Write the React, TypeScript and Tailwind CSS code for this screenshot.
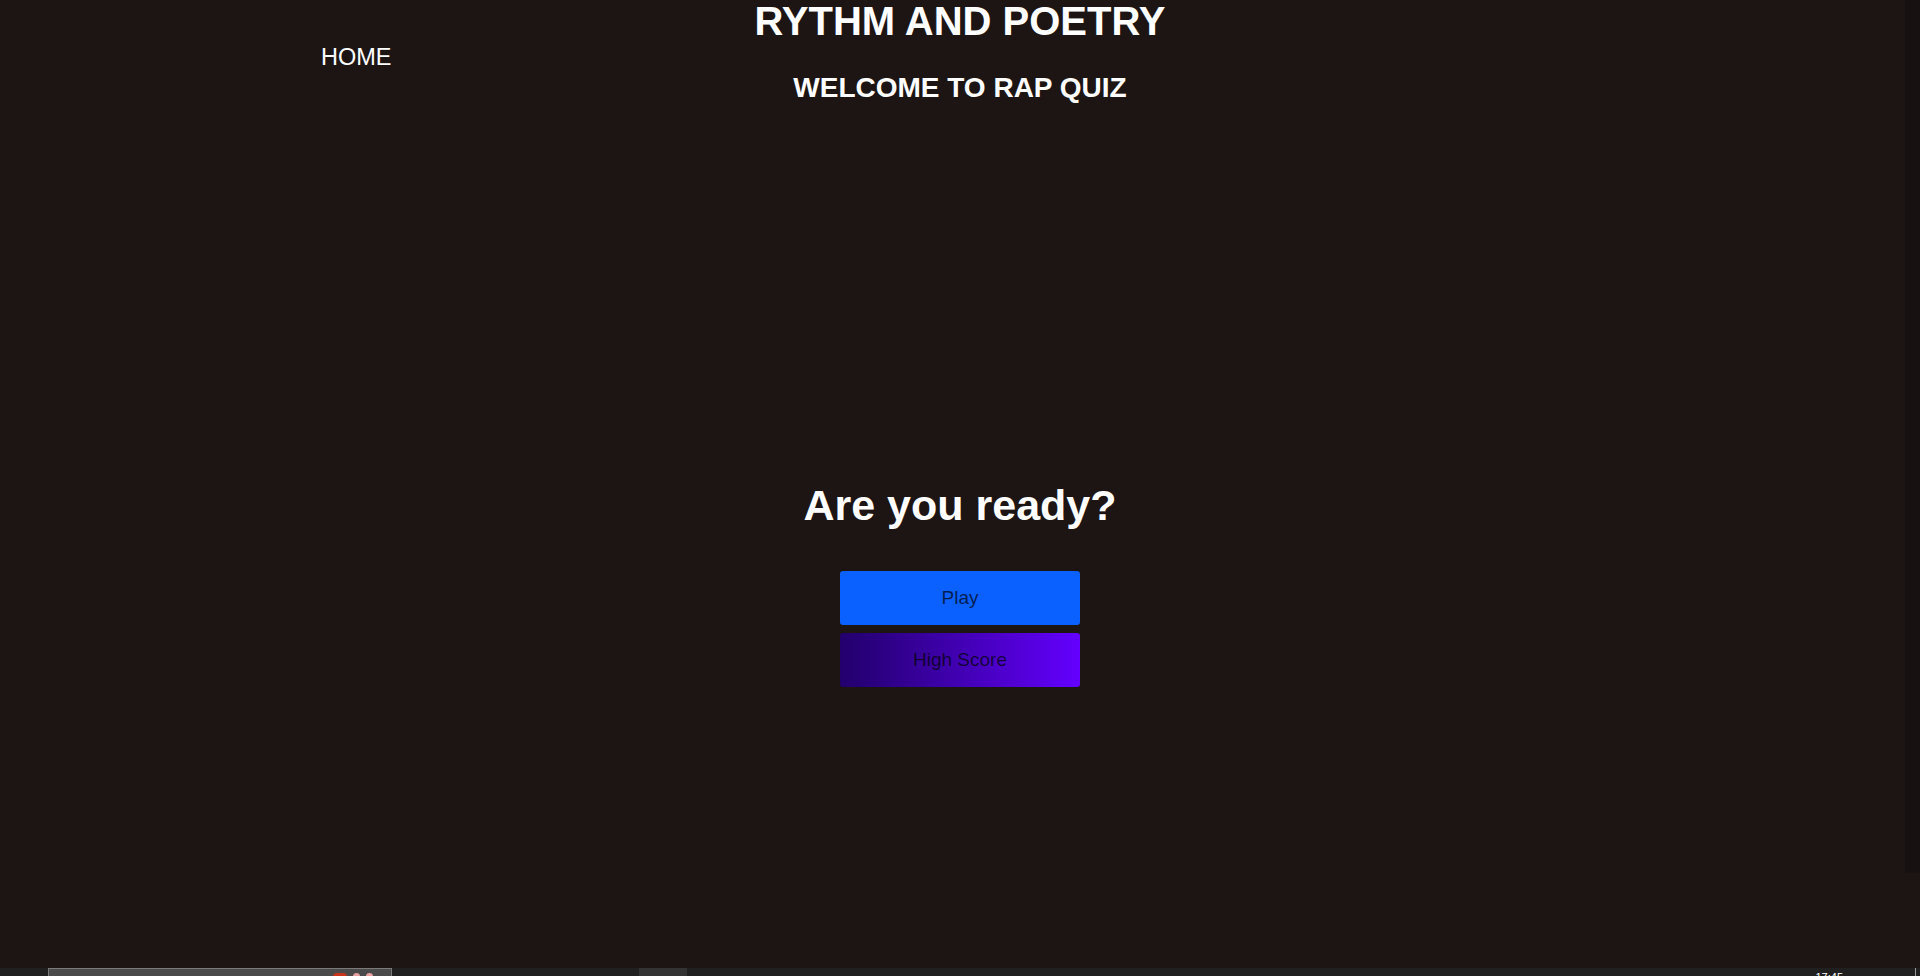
import React from "react";

const font = { fontFamily: '"Liberation Sans", Arial, sans-serif' };

function Taskbar() {
  return (
    <div className="flex h-[8px] items-start overflow-hidden bg-[#202020] pl-[48px]">
      {/* pinned window thumbnail */}
      <div className="relative flex h-[8px] w-[344px] items-start justify-end gap-[6px] border-x border-t border-[#7a7a7a] bg-[#4a4a4a] pr-[18px] pt-[4px]">
        <span className="h-[4px] w-[14px] rounded-t-full bg-[#c8341c]" />
        <span className="h-[4px] w-[7px] rounded-t-full bg-[#e8a0a0]" />
        <span className="h-[4px] w-[7px] rounded-t-full bg-[#e8a0a0]" />
      </div>
      <div className="ml-[247px] h-[8px] w-[48px] bg-[#333333]" />
      <div className="flex-1" />
      <span className="mr-[72px] mt-[4px] text-[11px] leading-none text-white">17:45</span>
      <div className="mr-[4px] h-[8px] w-px bg-[#9a9a9a]" />
    </div>
  );
}

export default function App() {
  return (
    <div className="relative flex h-[976px] flex-col overflow-hidden bg-[#1d1514]" style={font}>
      {/* page scrollbar track */}
      <div className="absolute right-0 top-0 h-[873px] w-[15px] bg-[#181111]" />

      <main className="flex h-[968px] flex-col">
        {/* Header */}
        <header className="grid grid-cols-[1fr_auto_1fr]">
          <nav className="pl-[321px] pt-[46px]">
            <a href="#" className="text-[23.5px] leading-none text-white">
              HOME
            </a>
          </nav>
          <div className="flex flex-col items-center">
            <h1 className="mt-[1px] text-[40px] font-bold leading-none text-white">RYTHM AND POETRY</h1>
            <h2 className="mt-[33px] text-[28px] font-bold leading-none text-white">WELCOME TO RAP QUIZ</h2>
          </div>
          <div />
        </header>

        {/* Start screen */}
        <section className="mt-[382px] flex flex-col items-center">
          <h1 className="text-[43px] font-bold leading-none text-white">Are you ready?</h1>
          <div className="mt-[44px] flex flex-col gap-[8px]">
            <button className="h-[54px] w-[240px] rounded-[3px] bg-[#0b61ff] text-[19px] text-black/70">
              Play
            </button>
            <button className="h-[54px] w-[240px] rounded-[3px] bg-gradient-to-r from-[#22006c] to-[#6400ff] text-[19px] text-black/70">
              High Score
            </button>
          </div>
        </section>
      </main>

      <Taskbar />
    </div>
  );
}
